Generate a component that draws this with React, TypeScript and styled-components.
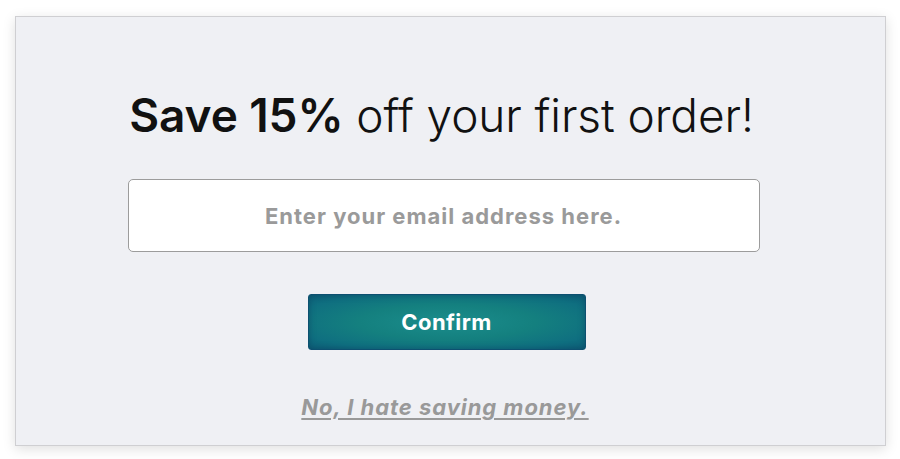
import styled, { createGlobalStyle } from "styled-components";

const GlobalStyle = createGlobalStyle`
  html, body {
    margin: 0;
    padding: 0;
    background: #ffffff;
  }
  body {
    font-family: Inter, "Liberation Sans", sans-serif;
  }
`;

const Page = styled.div`
  width: 900px;
  height: 459px;
  padding: 16px 14px 13px 15px;
  box-sizing: border-box;
`;

const Card = styled.div`
  height: 100%;
  background: #eff0f4;
  border: 1px solid #cfcfd2;
  box-shadow: 0 3px 12px rgba(0, 0, 0, 0.13);
  box-sizing: border-box;
  display: flex;
  flex-direction: column;
  align-items: center;
  padding-top: 68px;
  padding-right: 8px;
`;

const Heading = styled.h1`
  margin: 0;
  font-size: 46px;
  line-height: 60px;
  font-weight: 300;
  color: #111;
  letter-spacing: -0.1px;
  padding-right: 10px;

  strong {
    font-weight: 600;
  }
`;

const EmailInput = styled.input`
  margin: 34px 6px 0 0;
  width: 632px;
  height: 73px;
  box-sizing: border-box;
  border: 1px solid #9c9c9c;
  border-radius: 5px;
  background: #fff;
  text-align: center;
  font-family: Inter, "Liberation Sans", sans-serif;
  font-size: 22px;
  font-weight: 700;
  letter-spacing: 1px;
  color: #333;
  outline: none;

  &::placeholder {
    color: #9a9a9a;
  }
`;

const ConfirmButton = styled.button`
  margin-top: 42px;
  width: 278px;
  height: 56px;
  border: 1px solid #0d5070;
  border-radius: 3px;
  background: radial-gradient(ellipse at center, #1b8d8c 0%, #14807f 45%, #0f6f80 80%, #0d5f78 100%);
  box-shadow: inset 0 0 6px rgba(10, 60, 90, 0.5);
  color: #fff;
  font-family: Inter, "Liberation Sans", sans-serif;
  font-size: 22px;
  font-weight: 700;
  letter-spacing: 0.4px;
  cursor: pointer;
`;

const DeclineLink = styled.a`
  margin: 44px 3px 0 0;
  font-size: 22px;
  font-weight: 700;
  font-style: italic;
  letter-spacing: 0.95px;
  color: #999999;
  text-decoration: underline;
  text-underline-offset: 3px;
  text-decoration-thickness: 2px;
  cursor: pointer;
`;

export default function App() {
  return (
    <>
      <GlobalStyle />
      <Page>
        <Card>
          <Heading>
            <strong>Save 15%</strong> off your first order!
          </Heading>
          <EmailInput type="email" placeholder="Enter your email address here." />
          <ConfirmButton>Confirm</ConfirmButton>
          <DeclineLink>No, I hate saving money.</DeclineLink>
        </Card>
      </Page>
    </>
  );
}
